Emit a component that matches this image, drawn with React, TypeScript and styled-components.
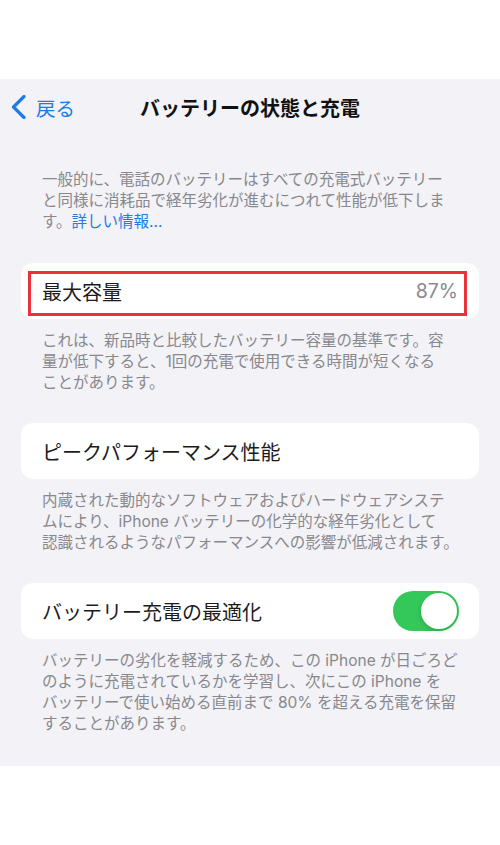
import React from 'react'
import styled, { createGlobalStyle } from 'styled-components'

const GlobalStyle = createGlobalStyle`
    html, body {
        margin: 0;
        padding: 0;
        background: #ffffff;
    }
    body {
        font-family: "Inter", "Noto Sans CJK JP", sans-serif;
        -webkit-font-smoothing: antialiased;
    }
`

const StatusArea = styled.div`
    height: 79px;
    background: #ffffff;
`

const Screen = styled.div`
    display: flex;
    flex-direction: column;
    background: #f2f2f7;
    padding-bottom: 32px;
`

const NavBar = styled.div`
    position: relative;
    display: flex;
    align-items: center;
    justify-content: center;
    height: 56px;
`

const BackButton = styled.div`
    position: absolute;
    left: 11px;
    top: 0;
    bottom: 0;
    display: flex;
    align-items: center;
    gap: 9px;
    color: #1f7be6;
    font-size: 19.5px;
`

const NavTitle = styled.h1`
    margin: 0;
    font-size: 20px;
    font-weight: 700;
    color: #111113;
`

const Footer = styled.p<{ $first?: boolean }>`
    margin: 0;
    padding: ${p => (p.$first ? '34px 20px 0 42px' : '11px 20px 0 42px')};
    margin-bottom: ${p => (p.$first ? '31px' : '0')};
    font-size: 15.5px;
    line-height: 21px;
    color: #88888d;
`

const Line = styled.span`
    display: block;
    white-space: nowrap;
`

const Link = styled.span`
    color: #1f7be6;
`

const Groups = styled.div`
    display: flex;
    flex-direction: column;
    gap: 30px;
`

const Card = styled.div`
    position: relative;
    display: flex;
    align-items: center;
    justify-content: space-between;
    height: 56px;
    margin: 0 21px;
    padding: 0 20px 0 21px;
    background: #ffffff;
    border-radius: 12px;
`

const Label = styled.span`
    font-size: 20px;
    color: #1c1c1e;
`

const Value = styled.span`
    font-size: 19.5px;
    color: #8a8a8e;
    padding-right: 1px;
`

// red marker drawn over the capacity row
const Highlight = styled.div`
    position: absolute;
    left: 7px;
    top: 8px;
    right: 12px;
    bottom: 3px;
    border: 3px solid #e8333b;
    pointer-events: none;
`

const Switch = styled.div<{ $on: boolean }>`
    display: flex;
    justify-content: ${p => (p.$on ? 'flex-end' : 'flex-start')};
    align-items: center;
    width: 66px;
    height: 40px;
    padding: 2px;
    box-sizing: border-box;
    border-radius: 20px;
    background: ${p => (p.$on ? '#34c759' : '#e9e9ea')};
`

const Knob = styled.div`
    width: 36px;
    height: 36px;
    border-radius: 50%;
    background: #ffffff;
    box-shadow: 0 2px 5px rgba(0, 0, 0, 0.15);
`

const Chevron = () => (
    <svg width="16" height="24" viewBox="0 0 16 24" fill="none">
        <path d="M13 1.5 L2.5 12 L13 22.5" stroke="#1f7be6" strokeWidth="3.2" strokeLinecap="round" strokeLinejoin="round" />
    </svg>
)

const Lines = ({ lines }: { lines: React.ReactNode[] }) => (
    <>
        {lines.map((l, i) => (
            <Line key={i}>{l}</Line>
        ))}
    </>
)

export default function App() {
    return (
        <>
            <GlobalStyle />
            <StatusArea />
            <Screen>
                <NavBar>
                    <BackButton>
                        <Chevron />
                        <span>戻る</span>
                    </BackButton>
                    <NavTitle>バッテリーの状態と充電</NavTitle>
                </NavBar>

                <Footer $first>
                    <Lines
                        lines={[
                            '一般的に、電話のバッテリーはすべての充電式バッテリー',
                            'と同様に消耗品で経年劣化が進むにつれて性能が低下しま',
                            <>
                                す。<Link>詳しい情報...</Link>
                            </>,
                        ]}
                    />
                </Footer>

                <Groups>
                    <div>
                        <Card>
                            <Label>最大容量</Label>
                            <Value>87%</Value>
                            <Highlight />
                        </Card>
                        <Footer>
                            <Lines
                                lines={[
                                    'これは、新品時と比較したバッテリー容量の基準です。容',
                                    '量が低下すると、1回の充電で使用できる時間が短くなる',
                                    'ことがあります。',
                                ]}
                            />
                        </Footer>
                    </div>

                    <div>
                        <Card>
                            <Label>ピークパフォーマンス性能</Label>
                        </Card>
                        <Footer>
                            <Lines
                                lines={[
                                    '内蔵された動的なソフトウェアおよびハードウェアシステ',
                                    'ムにより、iPhone バッテリーの化学的な経年劣化として',
                                    '認識されるようなパフォーマンスへの影響が低減されます。',
                                ]}
                            />
                        </Footer>
                    </div>

                    <div>
                        <Card>
                            <Label>バッテリー充電の最適化</Label>
                            <Switch $on>
                                <Knob />
                            </Switch>
                        </Card>
                        <Footer>
                            <Lines
                                lines={[
                                    'バッテリーの劣化を軽減するため、この iPhone が日ごろど',
                                    'のように充電されているかを学習し、次にこの iPhone を',
                                    'バッテリーで使い始める直前まで 80% を超える充電を保留',
                                    'することがあります。',
                                ]}
                            />
                        </Footer>
                    </div>
                </Groups>
            </Screen>
        </>
    )
}
